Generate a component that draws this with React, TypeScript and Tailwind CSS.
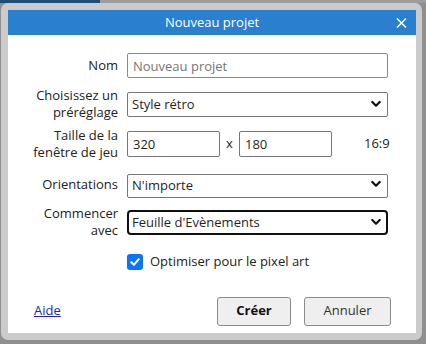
import React from 'react'

const font = { fontFamily: '"Open Sans", "Noto Sans", Arial, sans-serif' }

function Chevron() {
  return (
    <svg
      width="10"
      height="7"
      viewBox="0 0 10 7"
      className="pointer-events-none absolute right-[7px] top-1/2 -translate-y-1/2"
    >
      <path d="M1.3 1.5 L5 5.2 L8.7 1.5" fill="none" stroke="#111" strokeWidth="2.2" strokeLinecap="round" strokeLinejoin="round" />
    </svg>
  )
}

function Select({ value, focused }: { value: string; focused?: boolean }) {
  return (
    <div className="relative w-[261px] h-full">
      <select
        defaultValue={value}
        className={
          focused
            ? 'h-full w-full appearance-none rounded-[4px] border-2 border-[#101010] bg-white pl-[3px] text-[13px] text-[#1f1f1f] outline-none'
            : 'h-full w-full appearance-none rounded-[2px] border border-[#767676] bg-white pl-[4px] text-[13px] text-[#1f1f1f] outline-none'
        }
      >
        <option>{value}</option>
      </select>
      <Chevron />
    </div>
  )
}

function Row({
  label,
  className,
  children,
}: {
  label: React.ReactNode
  className: string
  children: React.ReactNode
}) {
  return (
    <div className={'flex items-center ' + className}>
      <div className="w-[111px] shrink-0 pr-[9px] text-right text-[13px] leading-[17px] text-[#222]">{label}</div>
      {children}
    </div>
  )
}

export default function App() {
  return (
    <div className="h-[344px] w-[426px] overflow-hidden bg-[#8f8f8f]" style={font}>
      <div className="flex h-[3px]">
        <div className="w-[100px] bg-[#1d4e78]" />
        <div className="flex-1 bg-[#9d9d9d]" />
      </div>
      <div className="ml-[1px] mr-[4px] flex h-[337px] flex-col rounded-[7px] bg-[#cbcbcb] pb-[7px] pl-[7px] pr-[6px] pt-[7px]">
        {/* title bar */}
        <div className="relative flex h-[25px] shrink-0 items-center justify-center bg-[#2b7fcf] text-[13px] text-white">
          Nouveau projet
          <svg width="11" height="11" viewBox="0 0 11 11" className="absolute right-[9px] top-1/2 -translate-y-1/2">
            <path d="M1 1 L10 10 M10 1 L1 10" stroke="white" strokeWidth="1.5" />
          </svg>
        </div>

        {/* body */}
        <div className="flex flex-1 flex-col bg-white pl-[8px]">
          <Row label="Nom" className="mt-[18px] h-[25px]">
            <input
              placeholder="Nouveau projet"
              className="h-full w-[261px] rounded-[2px] border border-[#8a8a8a] px-[5px] text-[13px] text-[#1f1f1f] outline-none placeholder:text-[#767676]"
            />
          </Row>

          <Row
            label={
              <>
                Choisissez un
                <br />
                préréglage
              </>
            }
            className="mt-[13px] h-[25px]"
          >
            <Select value="Style rétro" />
          </Row>

          <Row
            label={
              <>
                Taille de la
                <br />
                fenêtre de jeu
              </>
            }
            className="mt-[15px] h-[26px]"
          >
            <input
              defaultValue="320"
              className="h-full w-[93px] rounded-[2px] border border-[#767676] px-[5px] text-[13px] text-[#1f1f1f] outline-none"
            />
            <span className="w-[19px] text-center text-[13px] text-[#222]">x</span>
            <input
              defaultValue="180"
              className="h-full w-[93px] rounded-[2px] border border-[#767676] px-[5px] text-[13px] text-[#1f1f1f] outline-none"
            />
            <span className="ml-[32px] text-[13px] text-[#222]">16:9</span>
          </Row>

          <Row label="Orientations" className="mt-[15px] h-[24px]">
            <Select value="N'importe" />
          </Row>

          <Row
            label={
              <>
                Commencer
                <br />
                avec
              </>
            }
            className="mt-[13px] h-[25px]"
          >
            <Select value="Feuille d'Evènements" focused />
          </Row>

          <div className="ml-[111px] mt-[18px] flex items-center gap-[7px]">
            <span className="flex h-[16px] w-[16px] items-center justify-center rounded-[3px] bg-[#0b76f5]">
              <svg width="12" height="12" viewBox="0 0 12 12">
                <path d="M2.3 6.3 L4.9 8.8 L9.8 3.2" fill="none" stroke="white" strokeWidth="2" strokeLinecap="round" strokeLinejoin="round" />
              </svg>
            </span>
            <span className="text-[13px] text-[#222]">Optimiser pour le pixel art</span>
          </div>

          <div className="mt-[25px] flex items-center pr-[25px]">
            <a href="#" className="ml-[18px] text-[13px] text-[#2323c8] underline">
              Aide
            </a>
            <div className="ml-auto flex gap-[13px]">
              <button className="h-[29px] w-[74px] rounded-[3px] border border-[#8a8a8a] bg-[#efefef] text-[13px] font-bold text-[#111]">
                Créer
              </button>
              <button className="h-[29px] w-[87px] rounded-[3px] border border-[#8a8a8a] bg-[#efefef] text-[13px] text-[#333]">
                Annuler
              </button>
            </div>
          </div>
        </div>
      </div>
    </div>
  )
}
